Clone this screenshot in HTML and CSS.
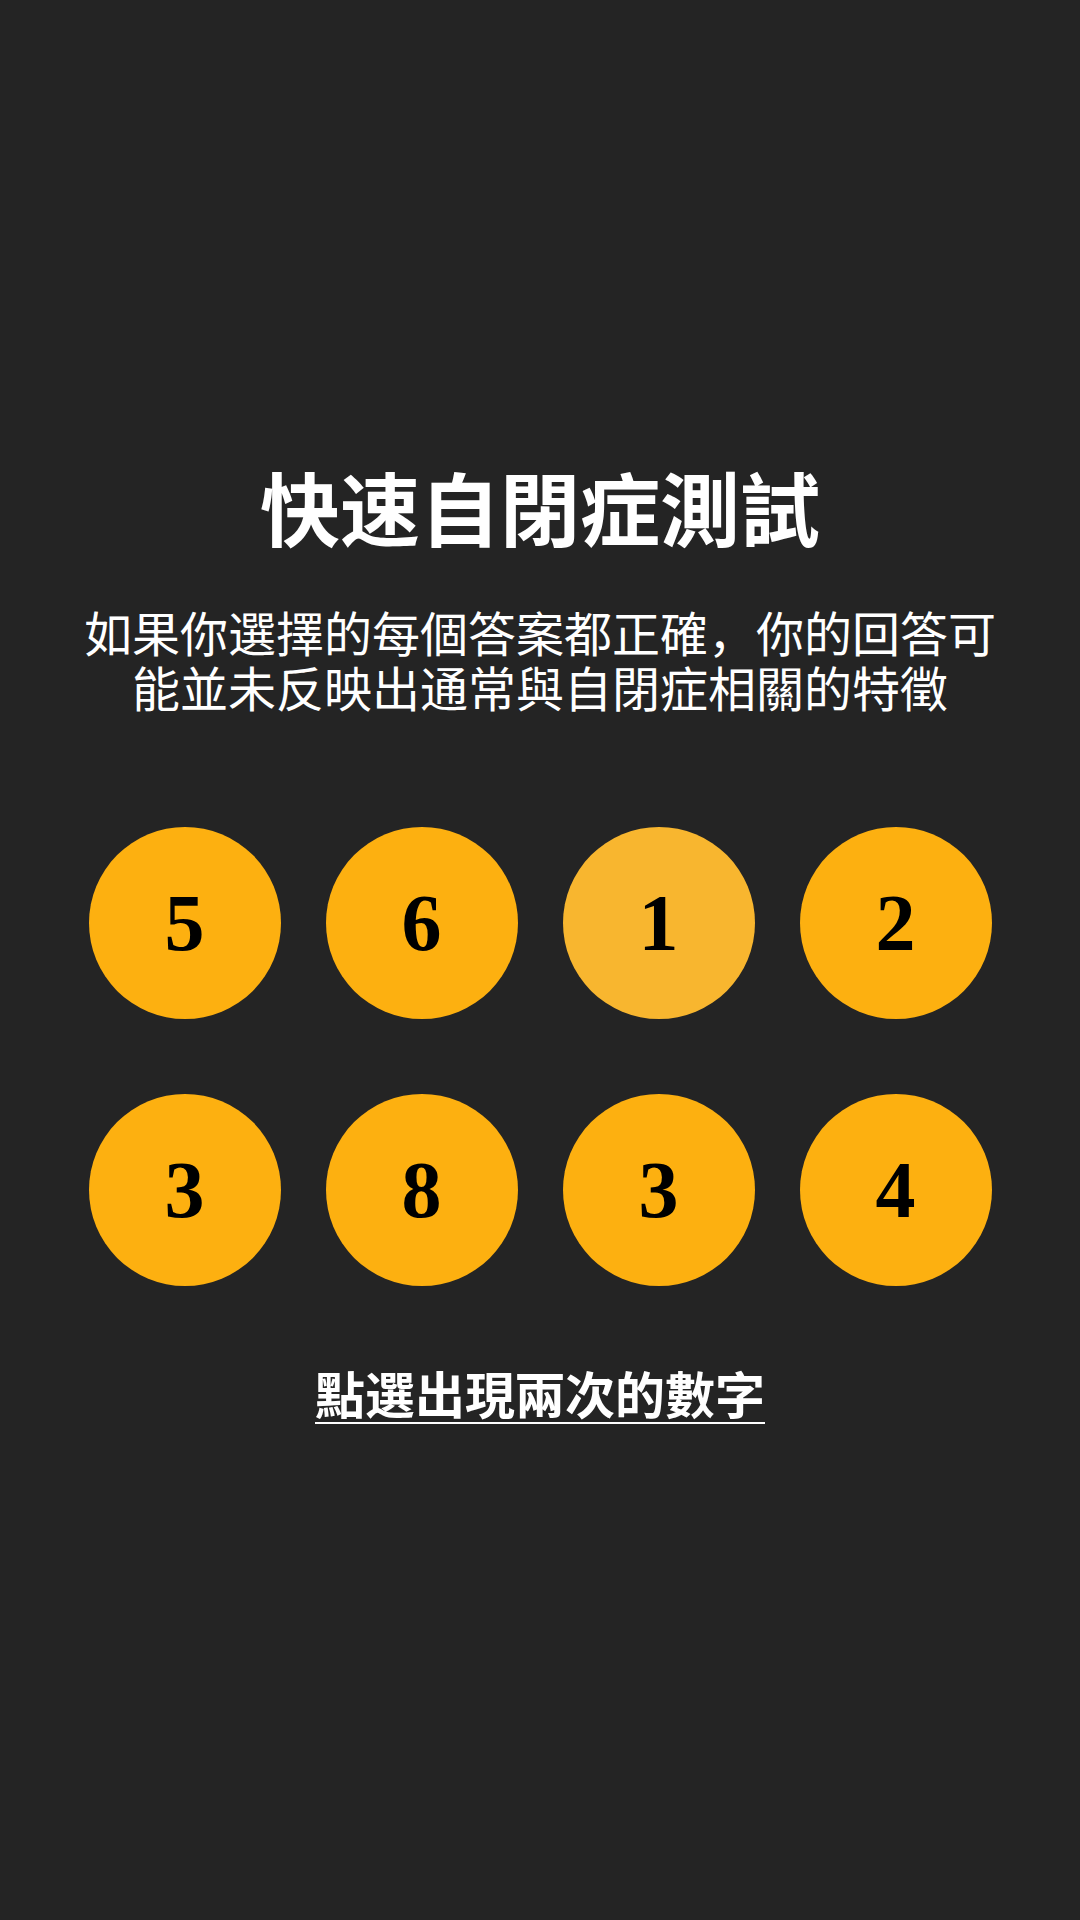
FILE: index.html
```html
<!DOCTYPE html>
<html lang="zh">
<head>
<meta charset="utf-8" />
<title>快速自閉症測試</title>
<link rel="stylesheet" href="styles.css">
</head>
<body>

<main class="quiz">
	<h1 class="title">快速自閉症測試</h1>
	<p class="intro">如果你選擇的每個答案都正確，你的回答可能並未反映出通常與自閉症相關的特徵</p>

	<div class="grid">
		<button class="num">5</button>
		<button class="num">6</button>
		<button class="num pressed">1</button>
		<button class="num">2</button>
		<button class="num">3</button>
		<button class="num">8</button>
		<button class="num">3</button>
		<button class="num">4</button>
	</div>

	<a class="hint" href="#">點選出現兩次的數字</a>
</main>

</body>
</html>
```

FILE: styles.css
```css
html, body{ margin:0; padding:0; }
body{ background:#242424; color:#fff; font-family:"Noto Sans CJK SC", "Noto Sans CJK TC", "Noto Sans", sans-serif; width:1080px; height:1920px; overflow:hidden; }

.quiz{ display:flex; flex-direction:column; align-items:center; padding-top:457px; }

.title{ margin:0; font-size:80px; line-height:96px; font-weight:700; }
.intro{ margin:51px 0 0; width:940px; font-size:48px; line-height:55px; text-align:center; }

.grid{ margin-top:113px; display:grid; grid-template-columns:repeat(4, 192px); column-gap:45px; row-gap:75px; }
.num{ width:192px; height:192px; border:0; border-radius:50%; padding:0; background:#fdb010; color:#000; font-family:"Liberation Serif", serif; font-weight:700; font-size:80px; line-height:1; display:flex; align-items:center; justify-content:center; }
.num.pressed{ background:#f8b62f; }

.hint{ margin-top:76px; color:#fff; font-size:50px; line-height:60px; font-weight:700; text-decoration:underline; text-decoration-thickness:2px; text-underline-offset:8px; }
```
